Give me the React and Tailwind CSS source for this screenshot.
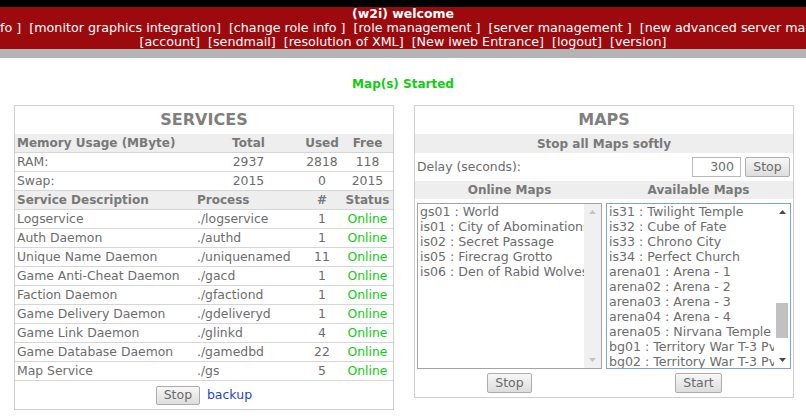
const services = [
  ["Logservice", "./logservice", "1"],
  ["Auth Daemon", "./authd", "1"],
  ["Unique Name Daemon", "./uniquenamed", "11"],
  ["Game Anti-Cheat Daemon", "./gacd", "1"],
  ["Faction Daemon", "./gfactiond", "1"],
  ["Game Delivery Daemon", "./gdeliveryd", "1"],
  ["Game Link Daemon", "./glinkd", "4"],
  ["Game Database Daemon", "./gamedbd", "22"],
  ["Map Service", "./gs", "5"],
];

const online = [
  "gs01 : World",
  "is01 : City of Abominations",
  "is02 : Secret Passage",
  "is05 : Firecrag Grotto",
  "is06 : Den of Rabid Wolves",
];

const available = [
  "is31 : Twilight Temple",
  "is32 : Cube of Fate",
  "is33 : Chrono City",
  "is34 : Perfect Church",
  "arena01 : Arena - 1",
  "arena02 : Arena - 2",
  "arena03 : Arena - 3",
  "arena04 : Arena - 4",
  "arena05 : Nirvana Temple",
  "bg01 : Territory War T-3 PvP",
  "bg02 : Territory War T-3 PvP",
];

function Btn({ children, w }) {
  return (
    <button
      className={`${w} h-[19px] flex items-center justify-center border border-[#acacac] rounded-[2px] bg-gradient-to-b from-[#f7f7f7] to-[#dddddd] text-[12.5px] text-[#6a6a6a] leading-none`}
    >
      {children}
    </button>
  );
}

function Arrow({ up, color }) {
  return (
    <svg width="7" height="4" viewBox="0 0 7 4">
      {up ? (
        <polygon points="0,4 7,4 3.5,0" fill={color} />
      ) : (
        <polygon points="0,0 7,0 3.5,4" fill={color} />
      )}
    </svg>
  );
}

function Row({ children, className = "" }) {
  return (
    <div
      className={`grid grid-cols-[180px_107px_40px_51px] h-[19px] border-b border-[#d6d6d6] items-center ${className}`}
    >
      {children}
    </div>
  );
}

export default function App() {
  return (
    <div className="w-[806px] h-[420px] overflow-hidden bg-white font-['DejaVu_Sans',sans-serif]">
      <div className="h-[7px] bg-black" />
      <div className="h-[42px] bg-[#9d0a0e] text-white text-[12.7px] leading-[14px] overflow-hidden">
        <div className="text-center font-bold text-[12.5px]">(w2i) welcome</div>
        <div className="whitespace-pre">
          {"fo ]  [monitor graphics integration]  [change role info ]  [role management ]  [server management ]  [new advanced server management]"}
        </div>
        <div className="whitespace-pre text-center">
          {"[account]  [sendmail]  [resolution of XML]  [New iweb Entrance]  [logout]  [version]"}
        </div>
      </div>
      <div className="h-[9px] bg-[#b4b4b4]" />

      <div className="mt-[19px] h-[14px] leading-[14px] text-center text-[12px] font-bold text-[#11cc11]">
        Map(s) Started
      </div>

      <div className="mt-[14px] flex items-start gap-[20px] pl-[14px]">
        {/* SERVICES */}
        <div className="w-[380px] border border-[#cfcfcf] text-[#6c6c6c] text-[12.4px]">
          <div className="h-[28px] flex items-center justify-center text-[16px] font-bold text-[#7f7f7f]">
            SERVICES
          </div>
          <Row className="bg-[#eeeeee] font-bold text-[12px] text-[#787878]">
            <div className="pl-[2px]">Memory Usage (MByte)</div>
            <div className="text-center">Total</div>
            <div className="text-center">Used</div>
            <div className="text-center">Free</div>
          </Row>
          <Row>
            <div className="pl-[2px]">RAM:</div>
            <div className="text-center">2937</div>
            <div className="text-center">2818</div>
            <div className="text-center">118</div>
          </Row>
          <Row>
            <div className="pl-[2px]">Swap:</div>
            <div className="text-center">2015</div>
            <div className="text-center">0</div>
            <div className="text-center">2015</div>
          </Row>
          <Row className="bg-[#eeeeee] font-bold text-[12px] text-[#787878]">
            <div className="pl-[2px]">Service Description</div>
            <div className="pl-[2px]">Process</div>
            <div className="text-center">#</div>
            <div className="text-center">Status</div>
          </Row>
          {services.map(([d, p, n]) => (
            <Row key={d}>
              <div className="pl-[2px] whitespace-nowrap">{d}</div>
              <div className="pl-[2px]">{p}</div>
              <div className="text-center">{n}</div>
              <div className="text-center text-[#11cc11]">Online</div>
            </Row>
          ))}
          <div className="h-[28px] flex items-center justify-center gap-[7px]">
            <Btn w="w-[44px]">Stop</Btn>
            <a className="text-[#1f45c8] text-[12.5px]">backup</a>
          </div>
        </div>

        {/* MAPS */}
        <div className="w-[380px] h-[293px] border border-[#cfcfcf] text-[#6c6c6c] text-[12.4px]">
          <div className="h-[28px] flex items-center justify-center text-[16px] font-bold text-[#7f7f7f]">
            MAPS
          </div>
          <div className="h-[19px] bg-[#eeeeee] flex items-center justify-center font-bold text-[12px] text-[#787878]">
            Stop all Maps softly
          </div>
          <div className="h-[28px] flex items-center pl-[2px] pr-[3px]">
            <span className="flex-1">Delay (seconds):</span>
            <div className="w-[49px] h-[20px] border border-[#b9b9b9] flex items-center justify-end pr-[6px] text-[12.5px]">
              300
            </div>
            <div className="ml-[4px]">
              <div className="h-[20px] w-[45px] flex items-center justify-center border border-[#acacac] rounded-[2px] bg-gradient-to-b from-[#f7f7f7] to-[#dddddd] text-[12.5px] text-[#6a6a6a]">
                Stop
              </div>
            </div>
          </div>
          <div className="h-[18px] bg-[#eeeeee] grid grid-cols-2 items-center font-bold text-[12px] text-[#787878]">
            <div className="text-center">Online Maps</div>
            <div className="text-center">Available Maps</div>
          </div>
          <div className="grid grid-cols-2 mt-[4px]">
            <div className="flex flex-col items-center">
              <div className="w-[185px] h-[166px] border border-[#a3a3a3] flex text-[12.6px] leading-[15px] text-[#6c6c6c]">
                <div className="flex-1 overflow-hidden whitespace-nowrap pl-[2px]">
                  {online.map((m) => (
                    <div key={m}>{m}</div>
                  ))}
                </div>
                <div className="w-[17px] bg-[#f0f0f0] flex flex-col items-center justify-between py-[6px]">
                  <Arrow up color="#c4c4c4" />
                  <Arrow color="#c4c4c4" />
                </div>
              </div>
              <div className="mt-[4px]">
                <Btn w="w-[45px] h-[20px]">Stop</Btn>
              </div>
            </div>
            <div className="flex flex-col items-center">
              <div className="w-[185px] h-[166px] border border-[#7ba3d6] flex text-[12.6px] leading-[15px] text-[#6c6c6c]">
                <div className="flex-1 overflow-hidden whitespace-nowrap pl-[2px]">
                  {available.map((m) => (
                    <div key={m}>{m}</div>
                  ))}
                </div>
                <div className="w-[16px] bg-white flex flex-col items-center py-[6px]">
                  <Arrow up color="#4a4a4a" />
                  <div className="mt-[89px] w-[12px] h-[35px] bg-[#c1c1c1]" />
                  <div className="flex-1" />
                  <Arrow color="#4a4a4a" />
                </div>
              </div>
              <div className="mt-[4px]">
                <Btn w="w-[47px] h-[20px]">Start</Btn>
              </div>
            </div>
          </div>
        </div>
      </div>
    </div>
  );
}
